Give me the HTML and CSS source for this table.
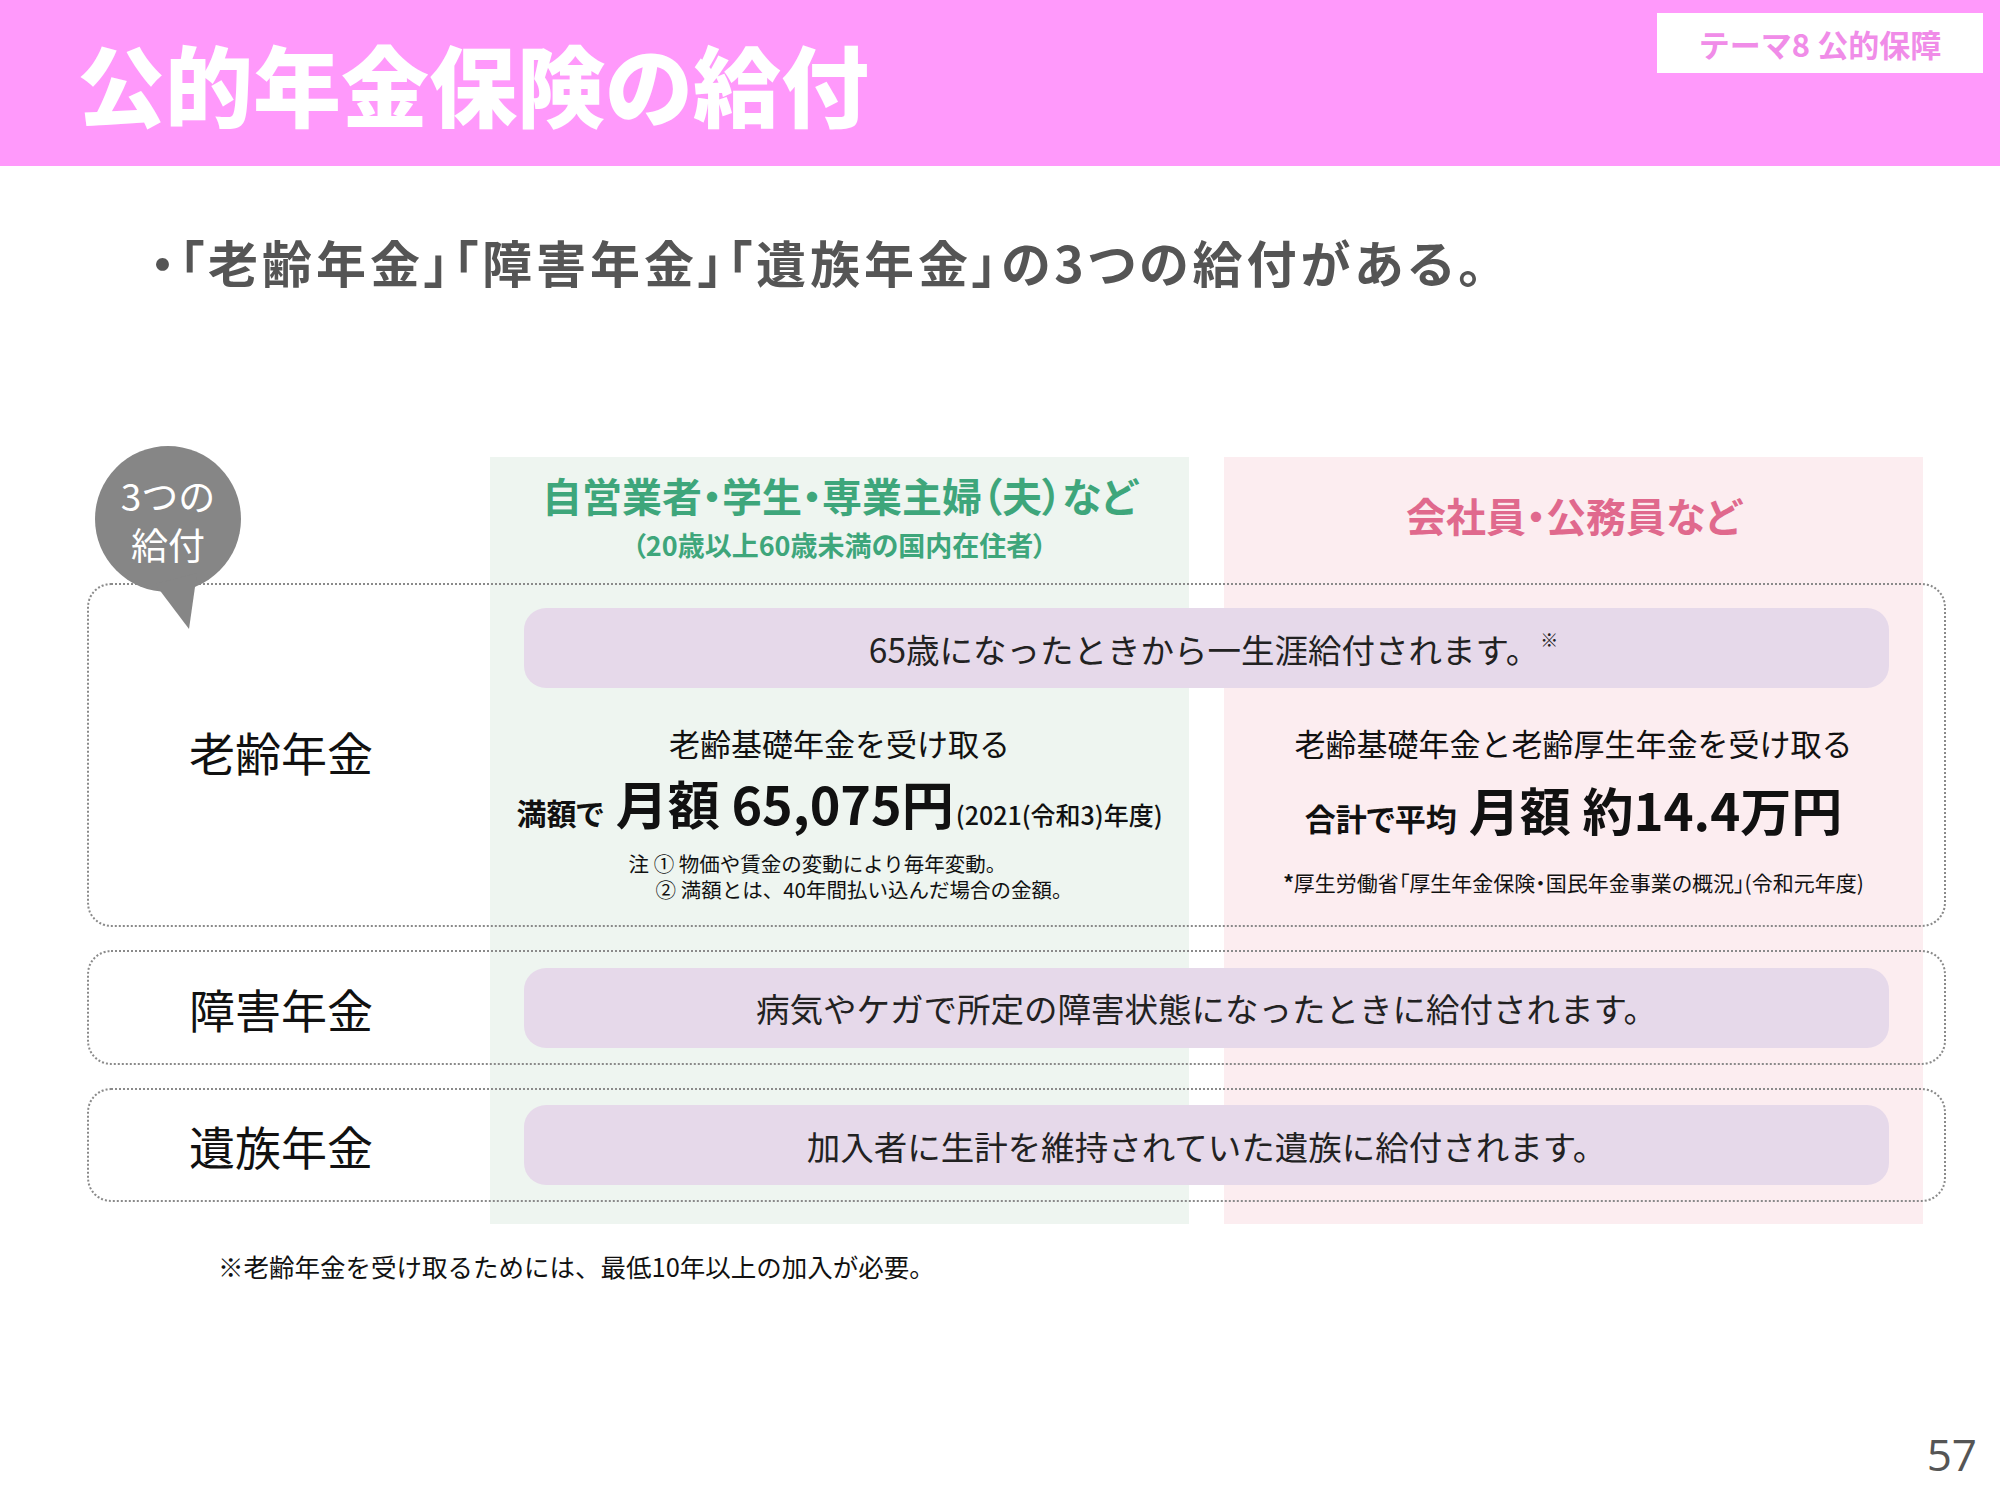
FILE: index.html
```html
<!DOCTYPE html>
<html lang="ja">
<head>
<meta charset="utf-8">
<title>公的年金保険の給付</title>
<link rel="stylesheet" href="styles.css">
</head>
<body>
<div class="slide">
  <header class="header">
    <h1 class="title">公的年金保険の給付</h1>
    <div class="badge">テーマ8 公的保障</div>
  </header>

  <p class="lead">・「老齢年金」「障害年金」「遺族年金」の3つの給付がある。</p>

  <section class="table">
    <div class="col col-green">
      <div class="col-head green-head">
        <div class="head-main">自営業者・学生・専業主婦（夫）など</div>
        <div class="head-sub">（20歳以上60歳未満の国内在住者）</div>
      </div>
    </div>
    <div class="col col-pink">
      <div class="col-head pink-head">
        <div class="head-main">会社員・公務員など</div>
      </div>
    </div>

    <div class="row row-old">
      <div class="label">老齢年金</div>
      <div class="pill pill-first"><span class="pill-text">65歳になったときから一生涯給付されます。</span><sup class="mark">※</sup></div>
      <div class="detail detail-left">
        <div class="d-line1">老齢基礎年金を受け取る</div>
        <div class="d-amount"><span class="a-pre">満額で</span><span class="a-big">月額 65,075円</span><span class="a-post">(2021(令和3)年度)</span></div>
        <div class="notes">
          <div class="note">注 ① 物価や賃金の変動により毎年変動。</div>
          <div class="note note2">② 満額とは、40年間払い込んだ場合の金額。</div>
        </div>
      </div>
      <div class="detail detail-right">
        <div class="d-line1">老齢基礎年金と老齢厚生年金を受け取る</div>
        <div class="d-amount d-amount-r"><span class="a-pre">合計で平均</span><span class="a-big">月額 約14.4万円</span></div>
        <div class="source"><b class="ast">*</b>厚生労働省「厚生年金保険・国民年金事業の概況」(令和元年度)</div>
      </div>
    </div>

    <div class="row row-dis">
      <div class="label">障害年金</div>
      <div class="pill">病気やケガで所定の障害状態になったときに給付されます。</div>
    </div>

    <div class="row row-sur">
      <div class="label">遺族年金</div>
      <div class="pill">加入者に生計を維持されていた遺族に給付されます。</div>
    </div>

    <div class="bubble">
      <svg class="bubble-shape" width="150" height="190" viewBox="0 0 150 190" aria-hidden="true">
        <circle cx="75" cy="73" r="73" fill="#868686"/>
        <polygon points="62,138 104,127 96,183" fill="#868686"/>
      </svg>
      <div class="bubble-text">
        <div class="bubble-line">3つの</div>
        <div class="bubble-line">給付</div>
      </div>
    </div>
  </section>

  <p class="footnote">※老齢年金を受け取るためには、最低10年以上の加入が必要。</p>

  <footer class="pageno">57</footer>
</div>
</body>
</html>
```

FILE: styles.css
```css
* { box-sizing: border-box; }
html, body { margin: 0; padding: 0; }
body {
  width: 2000px;
  height: 1500px;
  background: #fff;
  font-family: "Noto Sans CJK JP", "Noto Sans", sans-serif;
  color: #111;
  overflow: hidden;
}
.slide {
  display: flex;
  flex-direction: column;
  height: 1500px;
}

/* header */
.header {
  flex: none;
  height: 166px;
  background: #ff99fb;
  display: flex;
  justify-content: space-between;
  align-items: flex-start;
}
.title {
  margin: 0;
  padding: 38px 0 0 77px;
  font-size: 88px;
  line-height: 1;
  font-weight: 900;
  color: #fff;
}
.badge {
  margin: 13px 17px 0 0;
  width: 326px;
  height: 60px;
  background: #fff;
  color: #f08ce8;
  font-weight: 700;
  font-size: 31px;
  display: flex;
  align-items: center;
  justify-content: center;
}

/* lead */
.lead {
  margin: 70px 0 0 150px;
  font-size: 50px;
  line-height: 1;
  font-weight: 700;
  color: #555;
  letter-spacing: 4px;
  font-feature-settings: "palt";
}

/* table */
.table {
  position: relative;
  margin: 171px 0 0 87px;
  width: 1859px;
  display: grid;
  grid-template-columns: 403px 699px 35px 699px 23px;
  grid-template-rows: 126px 344px 23px 115px 23px 114px 22px;
}
.col { grid-row: 1 / -1; }
.col-green { grid-column: 2; background: #eef5f0; }
.col-pink { grid-column: 4; background: #fcedf0; }
.col-head {
  text-align: center;
  font-weight: 700;
  font-feature-settings: "palt";
  white-space: nowrap;
}
.head-main { font-size: 40px; line-height: 50px; }
.green-head { color: #3ea67b; padding-top: 13px; }
.green-head .head-sub { font-size: 27px; line-height: 34px; margin-top: 8px; }
.pink-head { color: #e0698d; padding-top: 33px; }

.row {
  grid-column: 1 / -1;
  display: grid;
  grid-template-columns: 401px 699px 35px 699px 21px;
  border: 2px dotted #8a8a8a;
  border-radius: 24px;
}
.label {
  grid-column: 1;
  padding-left: 100px;
  font-size: 46px;
  line-height: 1;
  color: #111;
  align-self: center;
}
.pill {
  grid-column: 2 / 5;
  margin: 0 34px;
  height: 80px;
  border-radius: 22px;
  background: #e6d9ea;
  display: flex;
  align-items: center;
  justify-content: center;
  font-size: 33.5px;
  color: #222;
}
.pill-first { padding-left: 14px; }
.mark {
  font-size: 18px;
  line-height: 1;
  align-self: flex-start;
  margin-top: 22px;
  margin-left: 1px;
}

.row-old { grid-row: 2; grid-template-rows: auto 1fr; }
.row-old .label { grid-row: 1 / 3; margin-bottom: 9px; }
.row-old .pill { grid-row: 1; margin-top: 23px; }
.row-dis { grid-row: 4; align-items: center; }
.row-sur { grid-row: 6; align-items: center; }

.detail {
  grid-row: 2;
  text-align: center;
  padding-top: 33px;
  color: #111;
}
.detail-left { grid-column: 2; }
.detail-right { grid-column: 4; }
.d-line1 { font-size: 31px; line-height: 44px; }
.d-amount {
  margin-top: 8px;
  line-height: 60px;
  height: 60px;
  white-space: nowrap;
  font-feature-settings: "palt";
}
.d-amount-r { margin-top: 14px; }
.a-pre { font-size: 30px; font-weight: 700; margin-right: 12px; }
.d-amount-r .a-pre { font-size: 31px; }
.a-big { font-size: 52px; font-weight: 700; }
.d-amount-r .a-big { font-size: 51px; }
.a-post { font-size: 25px; font-weight: 500; margin-left: 2px; }
.notes {
  display: inline-block;
  text-align: left;
  margin-top: 17px;
  padding-left: 22px;
  font-size: 20.5px;
  line-height: 26px;
}
.note2 { padding-left: 27px; }
.source {
  margin-top: 29px;
  font-size: 21px;
  line-height: 28px;
  white-space: nowrap;
  font-feature-settings: "palt";
}
.ast { font-weight: 700; }

/* bubble */
.bubble {
  position: absolute;
  left: 6px;
  top: -11px;
  width: 150px;
  height: 190px;
  z-index: 2;
}
.bubble-shape { display: block; }
.bubble-text {
  position: absolute;
  left: 0;
  top: 27px;
  width: 150px;
  text-align: center;
  color: #fff;
  font-size: 37px;
}
.bubble-line { height: 49px; line-height: 45px; }

/* footer */
.footnote {
  margin: 25px 0 0 218px;
  font-size: 25.5px;
  line-height: 34px;
  color: #111;
}
.pageno {
  margin-top: auto;
  margin-bottom: 24px;
  align-self: flex-end;
  padding-right: 23px;
  font-family: "Open Sans", "Noto Sans", sans-serif;
  font-size: 44px;
  line-height: 1;
  color: #555;
}
```
